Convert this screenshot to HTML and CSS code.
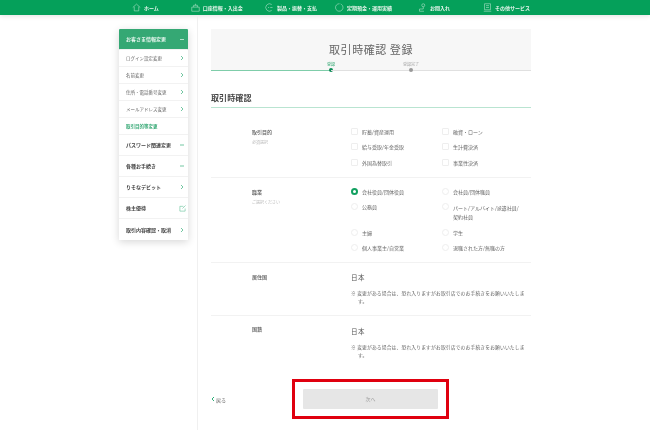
FILE: index.html
```html
<!DOCTYPE html>
<html lang="ja">
<head>
<meta charset="utf-8">
<title>取引時確認 登録</title>
<link rel="stylesheet" href="styles.css">
</head>
<body>
<nav class="topnav">
  <div class="nav-item nav-home"><svg class="nav-icon" viewBox="0 0 12 12"><path d="M1 6 6 1.500 11 6M3 5v5.500h6V5"/></svg><span>ホーム</span></div>
  <div class="nav-item nav-account"><svg class="nav-icon" viewBox="0 0 12 12"><path d="M1 5.500h10v5.500H1zM3.500 5.500V3h5v2.500M6 3V1"/></svg><span>口座情報・入出金</span></div>
  <div class="nav-item nav-pay"><svg class="nav-icon" viewBox="0 0 12 12"><path d="M9 2a5 5 0 1 0 0 8"/><path d="M4 6h1.500M7 6h3"/></svg><span>製品・振替・支払</span></div>
  <div class="nav-item nav-deposit"><svg class="nav-icon" viewBox="0 0 12 12"><path d="M10 3.500a5 5 0 1 1-4-2.500"/><path d="M7.500 1l2.500 2.500"/></svg><span>定期預金・運用実績</span></div>
  <div class="nav-item nav-contact"><svg class="nav-icon" viewBox="0 0 12 12"><circle cx="7" cy="3" r="2"/><path d="M7 5v3H2v3h6"/></svg><span>お問入れ</span></div>
  <div class="nav-item nav-other"><svg class="nav-icon" viewBox="0 0 12 12"><path d="M2 1h8v8H2zM4 3.500h4M4 6h4M1 11h10"/></svg><span>その他サービス</span></div>
</nav>
<div class="page">
  <aside class="sidebar">
    <div class="side-head"><span>お客さま情報変更</span><svg class="chev" viewBox="0 0 6 6"><path d="M1 3.500h4"/></svg></div>
    <div class="side-sub"><span>ログイン設定変更</span><svg class="chev" viewBox="0 0 6 6"><path d="M2 1l2 2-2 2"/></svg></div>
    <div class="side-sub"><span>名前変更</span><svg class="chev" viewBox="0 0 6 6"><path d="M2 1l2 2-2 2"/></svg></div>
    <div class="side-sub"><span>住所・電話番号変更</span><svg class="chev" viewBox="0 0 6 6"><path d="M2 1l2 2-2 2"/></svg></div>
    <div class="side-sub"><span>メールアドレス変更</span><svg class="chev" viewBox="0 0 6 6"><path d="M2 1l2 2-2 2"/></svg></div>
    <div class="side-sub side-current"><span>取引目的等変更</span></div>
    <div class="side-main"><span>パスワード関連変更</span><svg class="chev" viewBox="0 0 6 6"><path d="M1 3h4"/></svg></div>
    <div class="side-main"><span>各種お手続き</span><svg class="chev" viewBox="0 0 6 6"><path d="M1 3h4"/></svg></div>
    <div class="side-main"><span>りそなデビット</span><svg class="chev" viewBox="0 0 6 6"><path d="M2 1l2 2-2 2"/></svg></div>
    <div class="side-main"><span>株主優待</span><svg class="chev chev-ext" viewBox="0 0 8 8"><path d="M5 1.500H1v5.500h6V4M4 4l3.500-3.500"/></svg></div>
    <div class="side-main"><span>取引内容確認・取消</span><svg class="chev" viewBox="0 0 6 6"><path d="M2 1l2 2-2 2"/></svg></div>
  </aside>
  <main class="content">
    <header class="title-box">
      <h1>取引時確認 登録</h1>
      <div class="steps">
        <div class="step step-on"><span>登録</span><i></i></div>
        <div class="step step-off"><span>登録完了</span><i></i></div>
      </div>
    </header>
    <h2>取引時確認</h2>
    <section class="row row-purpose">
      <div class="label">取引目的<small>必須選択</small></div>
      <div class="options">
        <div class="opt"><i class="box"></i>貯蓄/資産運用</div>
        <div class="opt"><i class="box"></i>融資・ローン</div>
        <div class="opt"><i class="box"></i>給与受取/年金受取</div>
        <div class="opt"><i class="box"></i>生計費決済</div>
        <div class="opt"><i class="box"></i>外国為替取引</div>
        <div class="opt"><i class="box"></i>事業性決済</div>
      </div>
    </section>
    <section class="row row-job">
      <div class="label">職業<small>ご選択ください</small></div>
      <div class="options">
        <div class="opt"><i class="radio radio-on"></i>会社役員/団体役員</div>
        <div class="opt"><i class="radio"></i>会社員/団体職員</div>
        <div class="opt"><i class="radio"></i>公務員</div>
        <div class="opt opt-tall"><i class="radio"></i>パート/アルバイト/派遣社員/<br>契約社員</div>
        <div class="opt"><i class="radio"></i>主婦</div>
        <div class="opt"><i class="radio"></i>学生</div>
        <div class="opt"><i class="radio"></i>個人事業主/自営業</div>
        <div class="opt"><i class="radio"></i>退職された方/無職の方</div>
      </div>
    </section>
    <section class="row row-info">
      <div class="label">居住国</div>
      <div class="info"><p class="value">日本</p><p class="note">※ 変更がある場合は、恐れ入りますがお取引店でのお手続きをお願いいたします。</p></div>
    </section>
    <section class="row row-info row-last">
      <div class="label">国籍</div>
      <div class="info"><p class="value">日本</p><p class="note">※ 変更がある場合は、恐れ入りますがお取引店でのお手続きをお願いいたします。</p></div>
    </section>
    <footer class="actions">
      <a class="back"><svg class="chev" viewBox="0 0 6 6"><path d="M4 1 2 3l2 2"/></svg>戻る</a>
      <div class="next-wrap">
        <button class="next">次へ</button>
        <div class="highlight"></div>
      </div>
    </footer>
  </main>
</div>
</body>
</html>
```
FILE: styles.css
```css
* { box-sizing: border-box; }
html, body { margin: 0; height: 430px; overflow: hidden; background: #fff; }
body { font-family: "Noto Sans CJK JP", "Noto Sans", sans-serif; color: #444; filter: blur(.3px); }
svg { display: block; fill: none; stroke: currentColor; }

.topnav { height: 15px; background: #05a05a; color: #e6f5ec; box-shadow: 0 1px 5px rgba(0,0,0,.12); display: flex; position: relative; font-size: 5px; font-weight: 700; line-height: 14px; }
.nav-item { display: flex; align-items: center; gap: 3px; white-space: nowrap; }
.nav-icon { width: 9px; height: 9px; stroke-width: .7; opacity: .85; }
.nav-home { margin-left: 132px; }
.nav-account { margin-left: 32px; }
.nav-pay { margin-left: 22px; }
.nav-deposit { margin-left: 18px; }
.nav-contact { margin-left: 26px; }
.nav-other { margin-left: 33px; }

.page { display: flex; height: 415px; }
.sidebar { width: 69px; margin: 14px 0 0 119px; height: 211px; background: #fff; box-shadow: 0 2px 8px rgba(0,0,0,.16); font-size: 5px; line-height: 8px; }
.sidebar > div { display: flex; align-items: center; justify-content: space-between; padding: 0 3px 0 7px; border-bottom: 1px solid #f2f2f2; }
.chev { width: 6px; height: 6px; color: #4fb98a; stroke-width: .8; flex: none; }
.chev-ext { stroke-width: .6; width: 7px; height: 7px; margin-right: -1px; }
.side-head { height: 21px; background: #35a874; color: #e8f6ef; font-weight: 700; border-radius: 1px; }
.side-head .chev { color: #d5f0e2; }
.side-sub { height: 17px; color: #666; font-size: 4.500px; }
.side-current { color: #35a874; font-weight: 700; }
.side-main { height: 21px; font-weight: 700; color: #444; }
.sidebar > div:last-child { border-bottom: 0; height: 22px; }

.content { width: 335px; margin-left: 9px; padding: 14px 0 0 13px; border-left: 1px solid #f0f0f0; height: 415px; position: relative; }
.title-box { width: 320px; height: 42px; background: #f7f7f7; position: relative; text-align: center; }
h1 { margin: 0; padding-top: 12px; font-size: 11px; line-height: 16px; font-weight: 400; letter-spacing: .55px; color: #666; }
.steps { display: flex; height: 14px; margin-top: 0; }
.step { height: 14px; border-bottom: 1px solid #e0e0e0; position: relative; font-size: 4px; color: #aaa; text-align: right; }
.step-on { width: 120px; border-bottom-color: #7fcdaa; color: #35a874; }
.step-off { width: 200px; }
.step span { position: absolute; top: 4px; left: 0; right: 0; line-height: 6px; }
.step-on span { left: auto; right: -4px; }
.step-off span { left: 70px; right: auto; width: 20px; text-align: center; }
.step i { position: absolute; width: 4px; height: 4px; border-radius: 50%; background: #0a8a55; right: -2px; bottom: -2px; }
.step-off i { background: #999; right: auto; left: 78px; }

h2 { margin: 21px 0 0; height: 16px; width: 320px; font-size: 8px; line-height: 11px; font-weight: 700; color: #444; border-bottom: 1px solid #b9e4d1; letter-spacing: .1px; }

.row { display: flex; width: 320px; border-bottom: 1px solid #f2f2f2; }
.label { width: 140px; padding-left: 41px; font-size: 5px; line-height: 8px; font-weight: 500; color: #555; flex: none; }
.label small { display: block; font-size: 4px; line-height: 6px; margin-top: 3px; color: #bbb; font-weight: 400; }
.row-purpose { height: 70px; padding-top: 20px; }
.row-job { height: 85px; padding-top: 10px; }
.options { display: grid; grid-template-columns: 91px 89px; font-size: 5px; line-height: 8px; color: #666; align-content: start; }
.opt { display: flex; align-items: flex-start; padding-left: 11px; position: relative; margin-bottom: 7.250px; white-space: nowrap; }
.opt-tall { line-height: 9px; }
.box, .radio { position: absolute; left: 0; top: 0; width: 7px; height: 7px; border: 1px solid #eee; background: #fff; }
.box { border-radius: 1px; }
.radio { border-radius: 50%; }
.radio-on { border: 2px solid #12a060; }
.row-info { height: 53px; padding-top: 11px; }
.row-info .label { margin-top: -1px; }
.row-last { border-bottom: 0; }
.row-last .label { margin-top: -2px; }
.info { width: 180px; margin-top: -2px; }
.row-last .info { margin-top: -1px; }
.value { margin: 0; font-size: 6.500px; line-height: 10px; color: #555; letter-spacing: .4px; }
.note { margin: 7px 0 0; padding-left: 7px; text-indent: -7px; font-size: 4.800px; line-height: 8px; color: #666; letter-spacing: .13px; }

.actions { display: flex; align-items: center; width: 320px; margin-top: 20px; height: 20px; font-size: 5px; color: #666; }
.back { display: flex; align-items: center; margin-top: 0; width: 92px; gap: 0; margin-left: -1px; padding-right: 0; }
.back .chev { color: #2fae78; stroke-width: 1; }
.next-wrap { position: relative; margin-left: 1px; }
.next { display: block; width: 135px; height: 20px; border: 0; padding: 0; background: #e6e6e6; color: #aaa; font: 500 5px/20px "Noto Sans CJK JP", sans-serif; border-radius: 1px; }
.highlight { position: absolute; left: -11px; top: -10px; width: 157px; height: 40px; border: 3px solid #e0000f; }
```
